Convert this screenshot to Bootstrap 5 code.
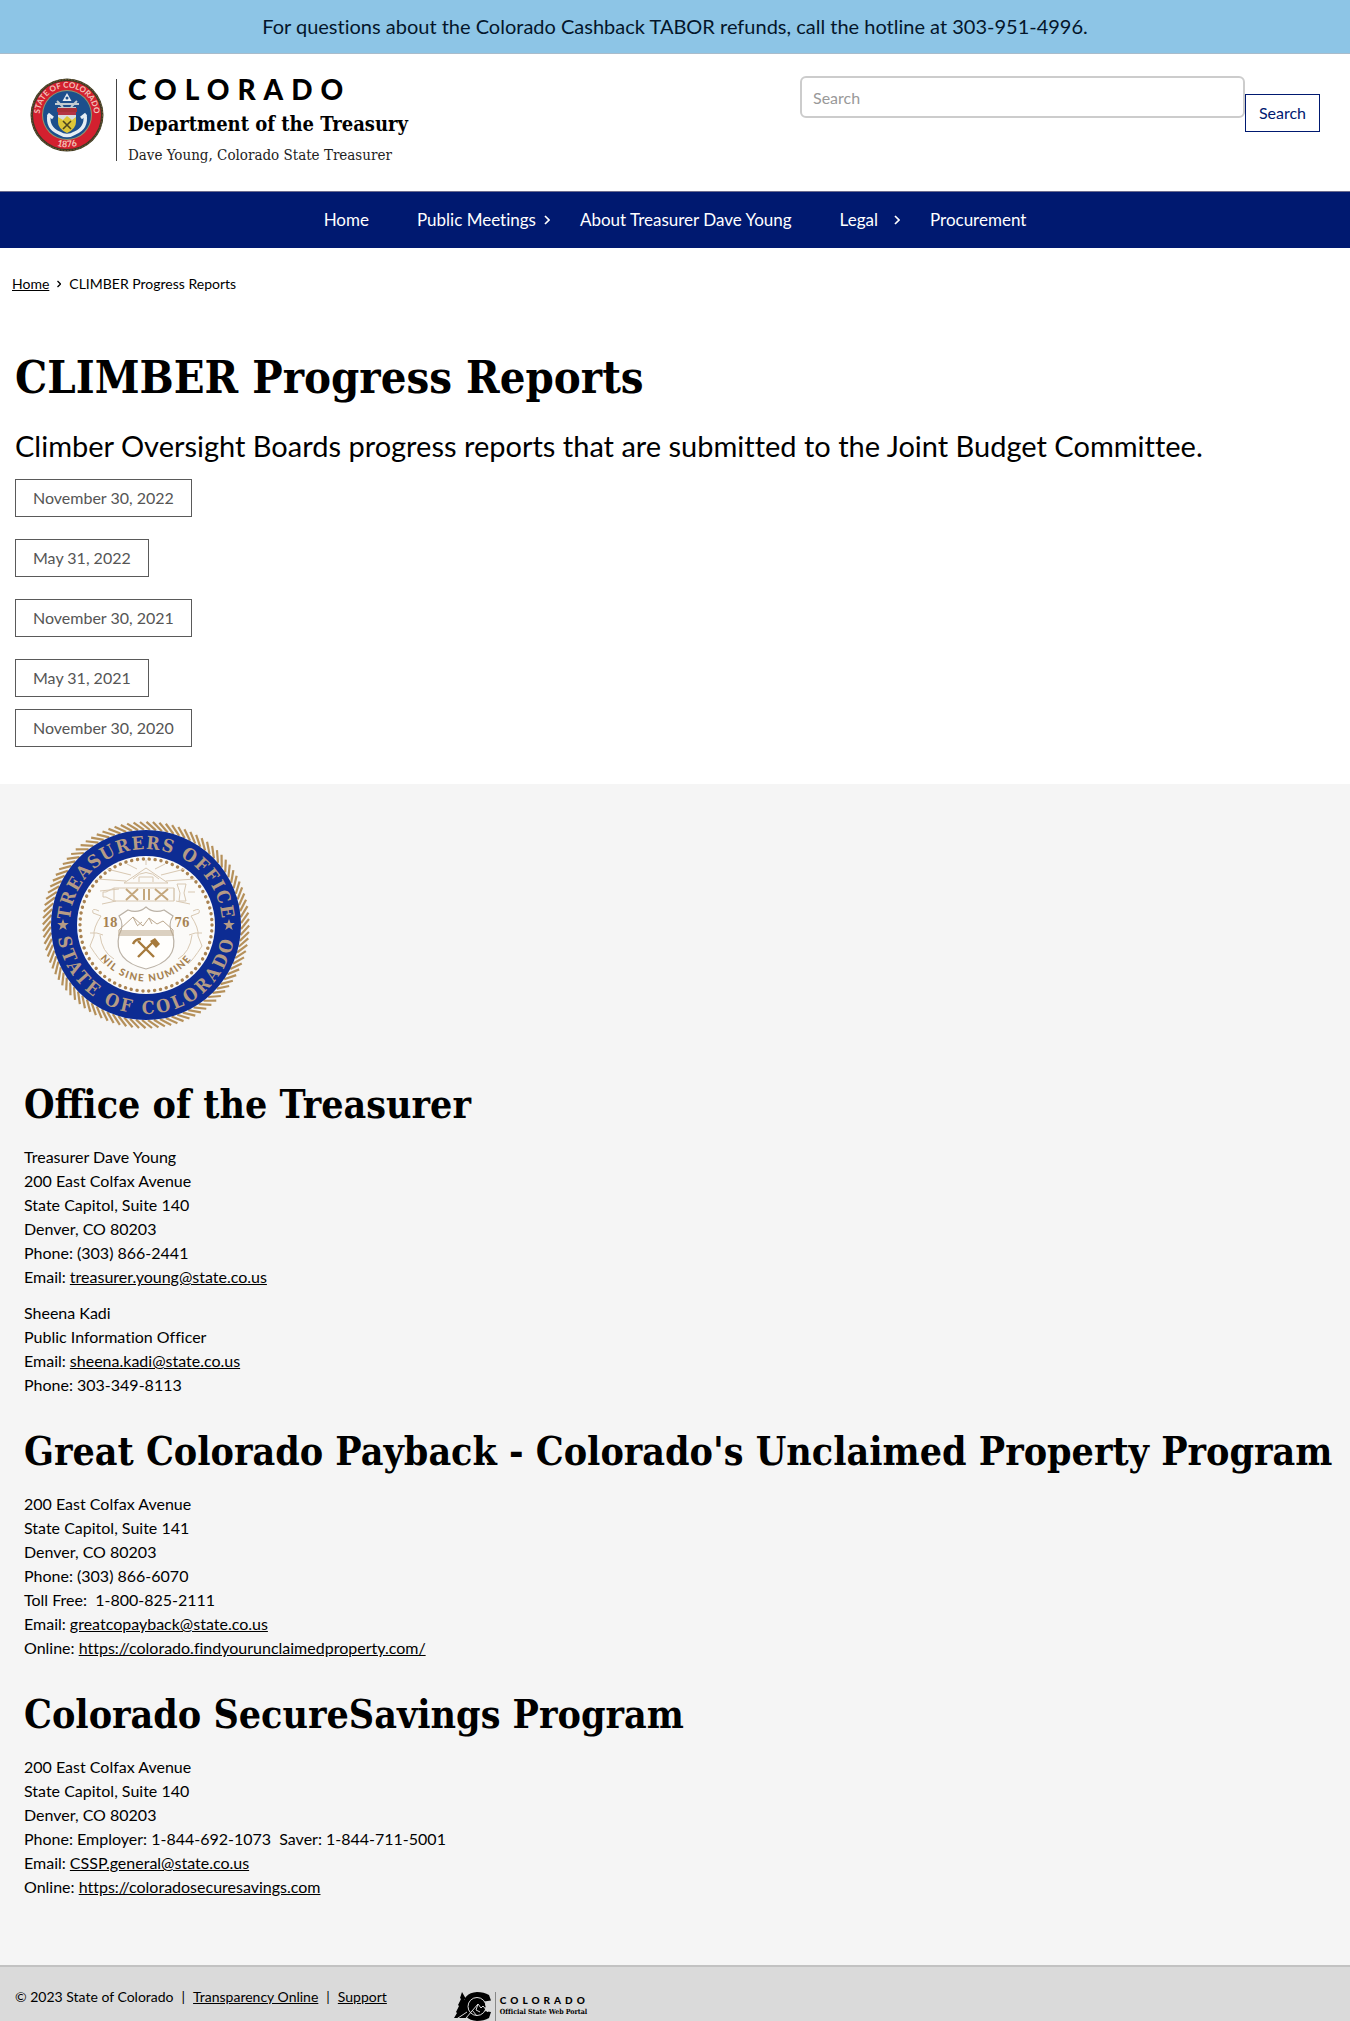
<!DOCTYPE html>
<html lang="en">
<head>
<meta charset="utf-8">
<meta name="viewport" content="width=device-width, initial-scale=1">
<title>CLIMBER Progress Reports | Department of the Treasury</title>
<link rel="stylesheet" href="https://cdn.jsdelivr.net/npm/bootstrap@5.3.0/dist/css/bootstrap.min.css">
<style>
  body { font-family: Lato, "Open Sans", sans-serif; font-size: 16px; line-height: 24px; color: #000; background: #fff; font-variant-ligatures: none; }
  a { color: inherit; }
  h1, h2, .slab { font-family: "DejaVu Serif Condensed", "DejaVu Serif", serif; }
  .contact-area h2 { font-variant-ligatures: normal; }
  .alert-strip { background: #8dc5e6; border-bottom: 1px solid #a9bccb; font-size: 20px; color: #04162b; padding: 14px 16px; line-height: 25px; }
  .site-head { padding: 22px 30px 30px; min-height: 137px; }
  .state-seal { width: 74px; height: 74px; margin-top: 2px; }
  .brand-text { border-left: 1px solid #444; margin-left: 12px; padding-left: 11px; margin-top: 3px; height: 82px; }
  .brand-state { font-weight: 900; font-size: 28px; line-height: 20px; letter-spacing: 8px; }
  .brand-dept { font-weight: 700; font-size: 20px; line-height: 24px; margin-top: 13px; }
  .brand-tag { font-size: 15px; line-height: 20px; margin-top: 9px; color: #222; }
  .search-box { width: 520px; max-width: 100%; }
  .search-box .form-control { height: 42px; border: 2px solid #ccc; border-radius: 6px; padding: 6px 11px; font-size: 16px; }
  .search-box .form-control::placeholder { color: #999; }
  .btn-find { margin-top: 18px; height: 38px; border: 1px solid #001970; border-radius: 0; color: #001970; padding: 5px 13px; line-height: 24px; font-size: 16px; }
  .main-nav { background: #001970; border-top: 1px solid #6b6b8c; padding: 16px; min-height: 57px; font-size: 17px; color: #fff; }
  .main-nav ul { column-gap: 48px; }
  .main-nav .has-sub { margin-right: -18px; }
  .main-nav a { color: #fff; text-decoration: none; }
  .main-nav svg { width: 6px; height: 10px; }
  .crumbs { font-size: 14px; padding: 24px 12px 0; }
  .crumbs svg { width: 4px; height: 8px; margin: 0 8px; }
  .report-area { padding: 56px 16px 37px 15px; }
  .report-area h1 { font-size: 45px; line-height: 52px; font-weight: 700; margin-bottom: 24px; }
  .intro { font-size: 29px; line-height: 36px; margin-bottom: 15px; }
  .btn-report { height: 38px; border: 1px solid #5a5a5a; border-radius: 0; color: #555; padding: 6px 17px; line-height: 24px; font-size: 16px; }
  .report-list { row-gap: 22px; margin-bottom: 12px; }
  .contact-area { background: #f5f5f5; padding: 34px 16px 66px 24px; }
  .office-seal { width: 214px; height: 214px; margin-left: 15px; margin-bottom: 48px; }
  .contact-area h2 { font-size: 39px; line-height: 48px; font-weight: 700; margin: 0 0 17px; }
  .contact-area section + section { margin-top: 30px; }
  .contact-area p { margin-bottom: 12px; }
  .contact-area p:last-child { margin-bottom: 0; }
  .site-foot { background: #dadada; border-top: 2px solid #c2c2c2; border-bottom: 1px solid #a9c3e8; padding: 18px 15px 0; font-size: 14px; }
  .site-foot .bar { margin: 0 8px; }
  .portal { margin-left: 67px; padding-top: 7px; }
  .portal svg { width: 38px; height: 29px; }
  .portal-text { border-left: 1px solid #888; margin-left: 3px; padding: 3px 0 0 4px; height: 29px; }
  .portal-state { font-size: 10px; line-height: 10px; font-weight: 900; letter-spacing: 4px; }
  .portal-sub { font-size: 7px; line-height: 10px; font-weight: 700; margin-top: 2px; }
</style>
<script src="https://cdn.jsdelivr.net/npm/bootstrap@5.3.0/dist/js/bootstrap.bundle.min.js"></script>
</head>
<body>
<div class="alert-strip text-center">For questions about the Colorado Cashback TABOR refunds, call the hotline at 303-951-4996.</div>

<header class="site-head d-flex flex-wrap justify-content-between align-items-start">
  <div class="d-flex align-items-start">
    <svg class="state-seal" viewBox="0 0 74 74" role="img" aria-label="State of Colorado seal">
      <defs>
        <path id="sealTop" d="M10.500 43A27.200 27.200 0 1 1 63.500 43"/>
        <path id="sealBottom" d="M22 65.500A32 32 0 0 0 52 65.500"/>
      </defs>
      <circle cx="37" cy="37" r="36.500" fill="#3f3a25"/>
      <circle cx="37" cy="37" r="35.500" fill="none" stroke="#7d6a3c" stroke-dasharray="1.500 1.500"/>
      <circle cx="37" cy="37" r="34" fill="#d3202f"/>
      <circle cx="37" cy="37" r="25" fill="#8c9a72"/>
      <circle cx="37" cy="37" r="24" fill="#1d4f8c"/>
      <g font-family="Lato, sans-serif" font-weight="700" fill="#f2c4ba">
        <text font-size="8"><textPath href="#sealTop" startOffset="50%" text-anchor="middle">STATE OF COLORADO</textPath></text>
        <text font-size="9"><textPath href="#sealBottom" startOffset="50%" text-anchor="middle">1876</textPath></text>
      </g>
      <path d="M37 15l4.500 8h-9z" fill="#e8eef2"/><circle cx="37" cy="20" r="1.500" fill="#1d4f8c"/>
      <path d="M25 26h24M27 23l6 6M47 23l-6 6M28 30h18" stroke="#c3ccd0" stroke-width="2"/>
      <path d="M27 30h20v4H27z" fill="#a82f37"/>
      <path d="M28 34h18v10q0 7-9 11q-9-4-9-11z" fill="#dcc638"/>
      <path d="M28 34h18v5l-4 3l-5-4l-4 4l-5-3z" fill="#d9dde0"/>
      <path d="M28 34h18v3H28z" fill="#b43444"/>
      <path d="M33 43l8 8M41 43l-8 8" stroke="#4c4520" stroke-width="1.600"/>
      <path d="M19 37q-2 13 10 18q8 5 16 0q12-5 10-18" fill="none" stroke="#e6edf4" stroke-width="3.500"/>
      <path d="M18 36l5 4M56 36l-5 4" stroke="#e6edf4" stroke-width="3"/>
    </svg>
    <div class="brand-text">
      <div class="brand-state">COLORADO</div>
      <div class="brand-dept slab">Department of the Treasury</div>
      <div class="brand-tag slab">Dave Young, Colorado State Treasurer</div>
    </div>
  </div>
  <form class="search-box d-flex align-items-start" role="search">
    <label class="visually-hidden" for="site-search">Search</label>
    <input class="form-control" id="site-search" type="search" placeholder="Search">
    <button class="btn btn-find" type="button">Search</button>
  </form>
</header>

<nav class="main-nav" aria-label="Main">
  <ul class="list-unstyled d-flex flex-wrap justify-content-center mb-0">
    <li><a href="#">Home</a></li>
    <li class="has-sub d-flex align-items-center"><a href="#">Public Meetings</a><svg class="ms-2" viewBox="0 0 6 10" aria-hidden="true"><path d="M1 1l4 4l-4 4" fill="none" stroke="#fff" stroke-width="1.700"/></svg></li>
    <li><a href="#">About Treasurer Dave Young</a></li>
    <li class="has-sub d-flex align-items-center"><a href="#">Legal</a><svg class="ms-3" viewBox="0 0 6 10" aria-hidden="true"><path d="M1 1l4 4l-4 4" fill="none" stroke="#fff" stroke-width="1.700"/></svg></li>
    <li><a href="#">Procurement</a></li>
  </ul>
</nav>

<nav class="crumbs d-flex align-items-center" aria-label="Breadcrumb">
  <a href="#">Home</a><svg viewBox="0 0 4 8" aria-hidden="true"><path d="M.500 1l3 3l-3 3" fill="none" stroke="#000" stroke-width="1.300"/></svg><span>CLIMBER Progress Reports</span>
</nav>

<main class="report-area">
  <h1>CLIMBER Progress Reports</h1>
  <p class="intro">Climber Oversight Boards progress reports that are submitted to the Joint Budget Committee.</p>
  <div class="report-list d-flex flex-column align-items-start">
    <a class="btn btn-report" href="#">November 30, 2022</a>
    <a class="btn btn-report" href="#">May 31, 2022</a>
    <a class="btn btn-report" href="#">November 30, 2021</a>
    <a class="btn btn-report" href="#">May 31, 2021</a>
  </div>
  <div class="d-flex"><a class="btn btn-report" href="#">November 30, 2020</a></div>
</main>

<div class="contact-area">
  <svg class="office-seal d-block" viewBox="-107 -107 214 214" role="img" aria-label="Treasurers Office, State of Colorado">
    <defs>
      <path id="ringTop" d="M-75.900 7A76.200 76.200 0 1 1 75.900 7"/>
      <path id="ringBottom" d="M-89 0A89 89 0 0 0 89 0"/>
      <path id="motto" d="M-56 10A57 57 0 0 0 56 10"/>
    </defs>
    <g id="rope" stroke="#b5905a" stroke-width="2.200"></g>
    <circle r="95" fill="#0d2c93"/>
    <circle r="69" fill="#fbfaf8"/>
    <circle r="66" fill="none" stroke="#a98352" stroke-width="3.400" stroke-linecap="round" stroke-dasharray="0.100 5.820"/>
    <g font-family="'DejaVu Serif Condensed','DejaVu Serif',serif" font-weight="700" fill="#b59b85">
      <text font-size="18"><textPath href="#ringTop" startOffset="50%" text-anchor="middle" letter-spacing="1.500">TREASURERS OFFICE</textPath></text>
      <text font-size="18"><textPath href="#ringBottom" startOffset="50%" text-anchor="middle" letter-spacing="3">STATE OF COLORADO</textPath></text>
      <g fill="#a68252">
        <text x="-36" y="2" font-size="12" text-anchor="middle">18</text>
        <text x="36" y="2" font-size="12" text-anchor="middle">76</text>
      </g>
    </g>
    <path id="star" fill="#b59b85" d="M-83-6l1.500 4h4.300l-3.400 2.700l1.300 4.300l-3.700-2.600l-3.700 2.600l1.300-4.300l-3.400-2.700h4.300z"/>
    <use href="#star" x="166"/>
    <g fill="none" stroke="#d8c8b2" stroke-width="1">
      <path d="M0-60V-65M-9-56l-10-5M9-56l10-5M-15-50l-24-6M15-50l24-6M-20-44l-29-2M20-44l29-2M-27-36l-19 2M-30-24l-14 3M30-24l14 3"/>
      <path d="M0-57L22-42H-22zM-13-46q13-13 26 0M-7-43v-5h14v5"/>
      <path d="M-40-33l8-4h60v13h-60l-8-4h-3v-5zM-32-37v13M28-37v13M31-41h9l-2 9l2 8h-7l1-8zM42-33h7"/>
      <path d="M-47-14q-8-4-6 2l8 3q-8 12-7 20l-4 10q9 14 14 18M47-14q8-4 6 2l-8 3q8 12 7 20l4 10q-9 14-14 18M-46 10q2 17 14 24M46 10q-2 17-14 24M-56 8q7-1 13 2M56 8q-7-1-13 2"/>
    </g>
    <path d="M-20-36l12 11M-8-36l-12 11M-2-36v11M3-36v11M9-36l13 11M22-36l-13 11" fill="none" stroke="#c4a77d" stroke-width="2"/>
    <path d="M0-18q-8 7-18 3l-9 6q6 9 0 19q-6 26 27 34q33-8 27-34q-6-10 0-19l-9-6q-10 4-18-3z" fill="#fffefc" stroke="#bbb2a6" stroke-width="1.200"/>
    <path d="M-27 5l14-13l10 9l6-8l8 6l6-3l10 9M-13-8l4 8M3-7l3 6M-9 1l5-4" fill="none" stroke="#bba88f" stroke-width="1"/>
    <path d="M-28 6h56M-28 8h56M-28 10h56" stroke="#b8a385" stroke-width="1"/>
    <path d="M-8 16L8 32M8 16L-8 32" stroke="#a67a3c" stroke-width="2.400"/>
    <path d="M-13 19q2-5 8-5" fill="none" stroke="#a67a3c" stroke-width="2.400"/>
    <path d="M4 16l5-3l5 6l-4 4z" fill="#a67a3c"/>
    <text font-family="Lato, sans-serif" font-weight="900" font-size="10" fill="#a68252"><textPath href="#motto" startOffset="50%" text-anchor="middle" letter-spacing="1.500">NIL SINE NUMINE</textPath></text>
  </svg>

  <section>
    <h2>Office of the Treasurer</h2>
    <p>Treasurer Dave Young<br>200 East Colfax Avenue<br>State Capitol, Suite 140<br>Denver, CO 80203<br>Phone: (303) 866-2441<br>Email: <a href="#">treasurer.young@state.co.us</a></p>
    <p>Sheena Kadi<br>Public Information Officer<br>Email: <a href="#">sheena.kadi@state.co.us</a><br>Phone: 303-349-8113</p>
  </section>
  <section>
    <h2>Great Colorado Payback - Colorado's Unclaimed Property Program</h2>
    <p>200 East Colfax Avenue<br>State Capitol, Suite 141<br>Denver, CO 80203<br>Phone: (303) 866-6070<br>Toll Free:&nbsp; 1-800-825-2111<br>Email: <a href="#">greatcopayback@state.co.us</a><br>Online: <a href="#">https://colorado.findyourunclaimedproperty.com/</a></p>
  </section>
  <section>
    <h2>Colorado SecureSavings Program</h2>
    <p>200 East Colfax Avenue<br>State Capitol, Suite 140<br>Denver, CO 80203<br>Phone: Employer: 1-844-692-1073&nbsp; Saver: 1-844-711-5001<br>Email: <a href="#">CSSP.general@state.co.us</a><br>Online: <a href="#">https://coloradosecuresavings.com</a></p>
  </section>
</div>

<footer class="site-foot d-flex flex-wrap align-items-start">
  <div>© 2023 State of Colorado<span class="bar">|</span><a href="#">Transparency Online</a><span class="bar">|</span><a href="#">Support</a></div>
  <div class="portal d-flex">
    <svg viewBox="0 0 38 29" aria-hidden="true">
      <path d="M8 0l4 7l-2 0l3 6v13H0l3-5l-1-1l3-6l-1-1l3-6l-1-1z"/>
      <path d="M37 8.500L35 3q-5-3-12-3Q9 1 9 14.500T23 29q7 0 12-3l2-6l-7-1q-2 4-7 4q-8 0-8-8.500T23 6q5 0 7 3.500z"/>
      <circle cx="23" cy="14.500" r="9"/>
      <g fill="none" stroke="#dadada" stroke-width="1"><circle cx="23" cy="14.500" r="9"/><path d="M12 26l12-14l3 4l2-2l5 6M18 18l5 6M24 12l-2 6l4 2M1 28l12-8"/></g>
    </svg>
    <div class="portal-text">
      <div class="portal-state">COLORADO</div>
      <div class="portal-sub slab">Official State Web Portal</div>
    </div>
  </div>
</footer>
<script>
  // Twisted rope edge of the office seal
  const rope = document.getElementById('rope');
  for (let i = 0; i < 100; i++) {
    const strand = document.createElementNS('http://www.w3.org/2000/svg', 'path');
    strand.setAttribute('d', 'M-4-95L6-103');
    strand.setAttribute('transform', `scale(-1 1) rotate(${i * 3.6})`);
    rope.appendChild(strand);
  }
</script>
</body>
</html>
